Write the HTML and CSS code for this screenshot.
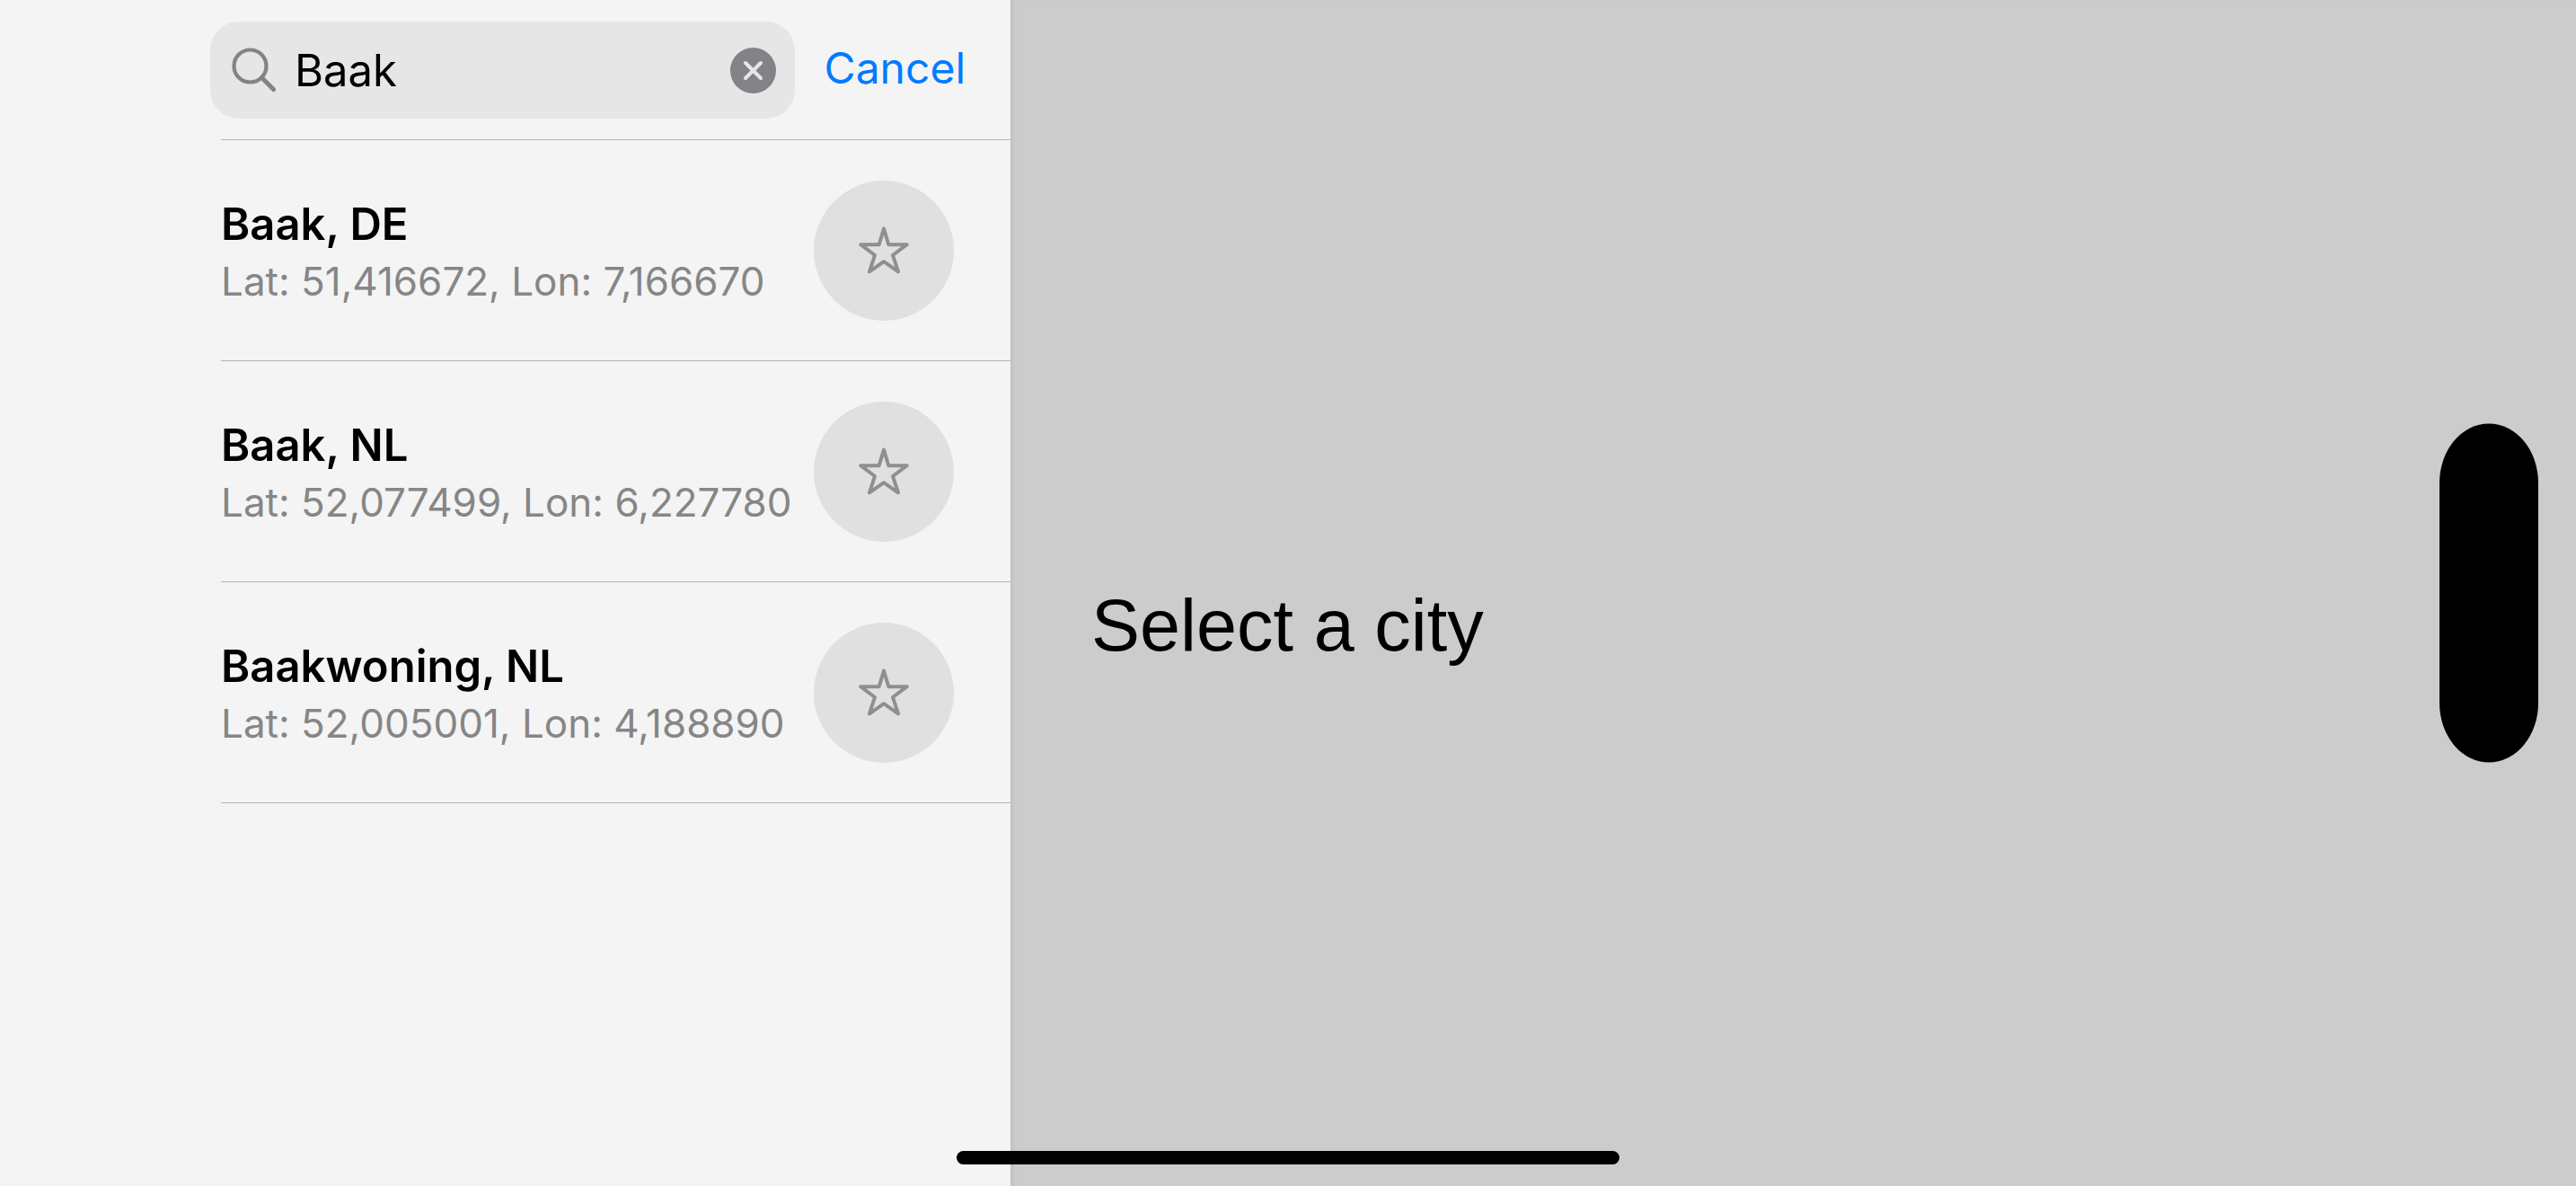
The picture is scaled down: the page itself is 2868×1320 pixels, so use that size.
FILE: index.html
```html
<!DOCTYPE html>
<html lang="en">
<head>
<meta charset="utf-8">
<meta name="viewport" content="width=device-width, initial-scale=1">
<title>City search</title>
<link rel="stylesheet" href="styles.css">
</head>
<body>
<svg class="symbols" aria-hidden="true">
  <symbol id="star" viewBox="0 0 60 60">
    <path d="M30 5.5 L35.3 23.2 L55.8 23.2 L40 35 L46 53.3 L30 42.2 L14 53.3 L20 35 L4.2 23.2 L24.7 23.2 Z" fill="none" stroke="currentColor" stroke-width="4" stroke-linejoin="round"/>
  </symbol>
</svg>
<div class="app">
  <aside class="sidebar">
    <form class="search" role="search">
      <div class="field">
        <label class="field-icon" for="city" aria-label="City">
          <svg width="50" height="50" viewBox="0 0 50 50" aria-hidden="true"><g fill="none" stroke="currentColor" stroke-linecap="round"><circle cx="20.500" cy="20.500" r="18" stroke-width="4.200"/><path d="M34 34 L46.500 46.500" stroke-width="5"/></g></svg>
        </label>
        <input class="input" id="city" type="text" value="Baak">
        <button class="clear" type="button" aria-label="Clear text">
          <svg width="51" height="51" viewBox="0 0 51 51" aria-hidden="true"><circle cx="25.500" cy="25.500" r="25.500" fill="currentColor"/><path d="M17 17 L34 34 M34 17 L17 34" stroke="#e6e6e6" stroke-width="4" stroke-linecap="round"/></svg>
        </button>
      </div>
      <button class="cancel" type="button">Cancel</button>
    </form>
    <ul class="results">
      <li class="city">
        <div class="info"><h2 class="name">Baak, DE</h2><p class="coords">Lat: 51,416672, Lon: 7,166670</p></div>
        <button class="favorite" type="button" aria-label="Add Baak, DE to favorites"><svg class="star" aria-hidden="true"><use href="#star"/></svg></button>
      </li>
      <li class="city">
        <div class="info"><h2 class="name">Baak, NL</h2><p class="coords">Lat: 52,077499, Lon: 6,227780</p></div>
        <button class="favorite" type="button" aria-label="Add Baak, NL to favorites"><svg class="star" aria-hidden="true"><use href="#star"/></svg></button>
      </li>
      <li class="city">
        <div class="info"><h2 class="name">Baakwoning, NL</h2><p class="coords">Lat: 52,005001, Lon: 4,188890</p></div>
        <button class="favorite" type="button" aria-label="Add Baakwoning, NL to favorites"><svg class="star" aria-hidden="true"><use href="#star"/></svg></button>
      </li>
    </ul>
  </aside>
  <main class="detail">
    <p class="prompt">Select a city</p>
  </main>
  <div class="island"></div>
  <div class="home-bar"></div>
</div>
</body>
</html>
```
FILE: styles.css
```css
* {
  box-sizing: border-box;
  margin: 0;
  padding: 0;
}

body {
  font-family: Inter, "Liberation Sans", sans-serif;
  color: #000;
}

button,
input {
  border: 0;
  background: none;
  font: inherit;
  color: inherit;
}

.symbols {
  position: absolute;
  width: 0;
  height: 0;
}

.app {
  position: relative;
  display: grid;
  grid-template-columns: minmax(0, 375fr) minmax(0, 581fr);
  min-height: 100vh;
}

.sidebar {
  background: #f4f4f4;
}

.search {
  display: flex;
  align-items: center;
  gap: 33px;
  padding: 24px 50px 23px 234px;
}

.field {
  display: flex;
  flex: 1;
  align-items: center;
  min-width: 0;
  height: 108px;
  padding: 0 21px 0 24px;
  border-radius: 32px;
  background: #e6e6e6;
}

.field-icon,
.clear {
  display: flex;
  color: #828287;
}

.input {
  flex: 1;
  width: 100%;
  min-width: 0;
  height: 60px;
  margin-left: 20px;
  font-size: 49px;
  outline: none;
}

.cancel {
  padding-bottom: 4px;
  font-size: 48px;
  line-height: 60px;
  color: #007aff;
}

.results {
  margin-left: 246px;
  border-top: 1px solid #b4b4b5;
  list-style: none;
}

.city {
  display: flex;
  align-items: center;
  justify-content: space-between;
  padding: 45px 63px 44px 0;
  border-bottom: 1px solid #b4b4b5;
}

.info {
  padding-top: 4px;
  white-space: nowrap;
}

.name {
  font-size: 49px;
  font-weight: 600;
  line-height: 64px;
}

.coords {
  font-size: 44px;
  line-height: 62px;
  color: #868686;
}

.favorite {
  display: grid;
  flex: none;
  place-items: center;
  width: 156px;
  height: 156px;
  border-radius: 50%;
  background: #e0e0e0;
  color: #8e8e93;
}

.star {
  width: 60px;
  height: 60px;
}

.detail {
  display: flex;
  align-items: center;
  padding: 72px 90px 0;
  background: #ccc;
  box-shadow: inset 1px 0 #c0c0c0, inset 5px 0 3px -1px #c3c3c3;
}

.prompt {
  font-family: "Liberation Sans", Arial, sans-serif;
  font-size: 81px;
  line-height: 100px;
}

.island {
  position: absolute;
  top: 50%;
  right: 42px;
  width: 110px;
  height: 377px;
  border-radius: 55px / 66px;
  background: #000;
  transform: translateY(-50%);
}

.home-bar {
  position: absolute;
  bottom: 24px;
  left: 50%;
  width: 738px;
  height: 15px;
  border-radius: 8px;
  background: #000;
  transform: translateX(-50%);
}
```
